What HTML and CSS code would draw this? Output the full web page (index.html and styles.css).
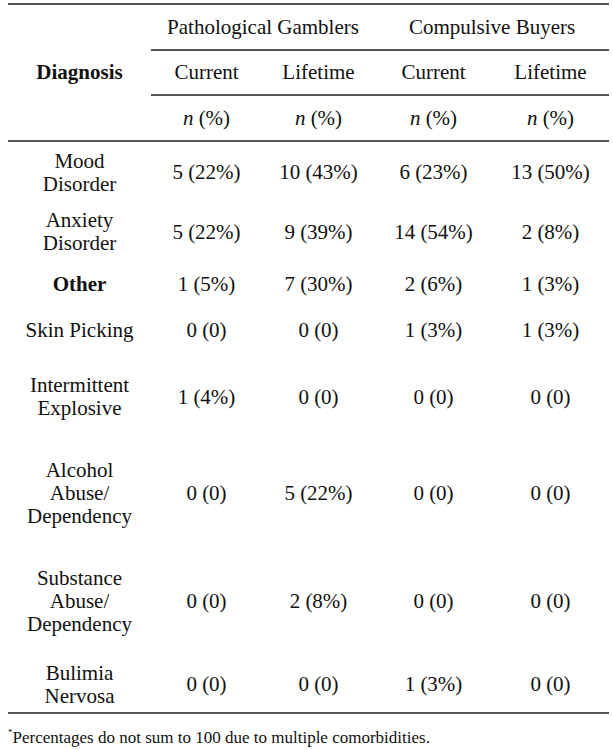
FILE: index.html
```html
<!DOCTYPE html>
<html>
<head>
<meta charset="utf-8">
<link rel="stylesheet" href="styles.css">
</head>
<body>
<div class="topline"></div>
<table class="tbl">
  <colgroup>
    <col class="c-diag"><col class="c1"><col class="c2"><col class="c3"><col class="c4">
  </colgroup>
  <thead>
    <tr class="h-group">
      <th rowspan="3" class="diag">Diagnosis</th>
      <th colspan="2" class="rule">Pathological Gamblers</th>
      <th colspan="2" class="rule">Compulsive Buyers</th>
    </tr>
    <tr class="h-sub">
      <th class="rule">Current</th><th class="rule">Lifetime</th>
      <th class="rule">Current</th><th class="rule">Lifetime</th>
    </tr>
    <tr class="h-n">
      <th><i>n</i> (%)</th><th><i>n</i> (%)</th><th><i>n</i> (%)</th><th><i>n</i> (%)</th>
    </tr>
  </thead>
  <tbody>
    <tr class="r62"><td>Mood<br>Disorder</td><td>5 (22%)</td><td>10 (43%)</td><td>6 (23%)</td><td>13 (50%)</td></tr>
    <tr class="r58"><td>Anxiety<br>Disorder</td><td>5 (22%)</td><td>9 (39%)</td><td>14 (54%)</td><td>2 (8%)</td></tr>
    <tr class="r46"><td><b>Other</b></td><td>1 (5%)</td><td>7 (30%)</td><td>2 (6%)</td><td>1 (3%)</td></tr>
    <tr class="r46"><td>Skin Picking</td><td>0 (0)</td><td>0 (0)</td><td>1 (3%)</td><td>1 (3%)</td></tr>
    <tr class="r88"><td>Intermittent<br>Explosive</td><td>1 (4%)</td><td>0 (0)</td><td>0 (0)</td><td>0 (0)</td></tr>
    <tr class="r104"><td>Alcohol<br>Abuse/<br>Dependency</td><td>0 (0)</td><td>5 (22%)</td><td>0 (0)</td><td>0 (0)</td></tr>
    <tr class="r112"><td>Substance<br>Abuse/<br>Dependency</td><td>0 (0)</td><td>2 (8%)</td><td>0 (0)</td><td>0 (0)</td></tr>
    <tr class="r56 last"><td>Bulimia<br>Nervosa</td><td>0 (0)</td><td>0 (0)</td><td>1 (3%)</td><td>0 (0)</td></tr>
  </tbody>
</table>
<p class="note"><sup>*</sup>Percentages do not sum to 100 due to multiple comorbidities.</p>
</body>
</html>
```
FILE: styles.css
```css
html, body {
  margin: 0;
  padding: 0;
  background: #fff;
}
body {
  padding: 3px 4px 0 8px;
  font-family: "Liberation Serif", Tinos, "Times New Roman", Times, serif;
  color: #111;
  font-size: 21px;
  line-height: 23px;
}
.topline {
  width: 601px;
  height: 2px;
  background: #555;
}
.tbl {
  border-collapse: collapse;
  width: 601px;
  table-layout: fixed;
}
.c-diag { width: 143px; }
.c1 { width: 111px; }
.c2 { width: 113px; }
.c3 { width: 117px; }
.c4 { width: 117px; }
th, td {
  padding: 0;
  text-align: center;
  vertical-align: middle;
  font-weight: normal;
}
th.diag { font-weight: bold; }
th.rule { border-bottom: 2px solid #555; }
.h-group { height: 45px; }
.h-sub { height: 45px; }
.h-n { height: 46px; }
.h-n th { border-bottom: 2px solid #555; }
.h-group th.diag { border-bottom: 2px solid #555; }
.r62 { height: 62px; }
.r58 { height: 58px; }
.r46 { height: 46px; }
.r88 { height: 88px; }
.r104 { height: 104px; }
.r112 { height: 112px; }
.r56 { height: 56px; }
tr.last td { border-bottom: 2px solid #555; }
.note {
  margin: 14px 0 0 0;
  font-size: 17px;
  line-height: 20px;
}
.note sup {
  font-size: 9px;
  vertical-align: top;
  line-height: 9px;
}
```
